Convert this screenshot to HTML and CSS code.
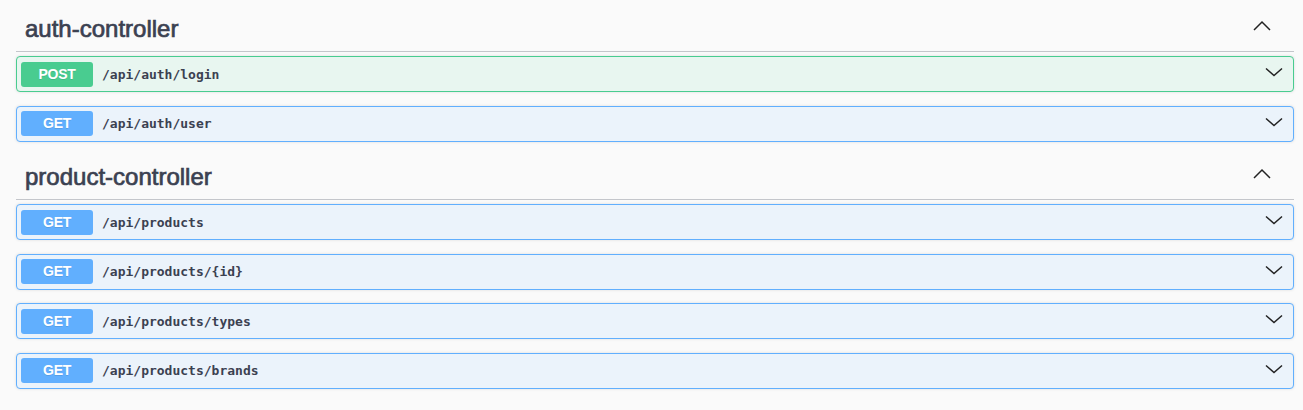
FILE: index.html
```html
<!DOCTYPE html>
<html>
<head>
<meta charset="utf-8">
<link rel="stylesheet" href="styles.css">
</head>
<body>
<div class="wrapper">
  <section class="tag-section">
    <h3 class="tag-head">
      <span class="tag-name">auth-controller</span>
      <svg class="arrow-up" width="20" height="20" viewBox="0 0 20 20"><polyline points="2,14 10,6 18,14"/></svg>
    </h3>
    <div class="opblock post">
      <span class="method">POST</span>
      <span class="path">/api/auth/login</span>
      <svg class="arrow" width="20" height="20" viewBox="0 0 20 20"><polyline points="2,6.5 10,13.5 18,6.5"/></svg>
    </div>
    <div class="opblock get">
      <span class="method">GET</span>
      <span class="path">/api/auth/user</span>
      <svg class="arrow" width="20" height="20" viewBox="0 0 20 20"><polyline points="2,6.5 10,13.5 18,6.5"/></svg>
    </div>
  </section>
  <section class="tag-section">
    <h3 class="tag-head">
      <span class="tag-name">product-controller</span>
      <svg class="arrow-up" width="20" height="20" viewBox="0 0 20 20"><polyline points="2,14 10,6 18,14"/></svg>
    </h3>
    <div class="opblock get">
      <span class="method">GET</span>
      <span class="path">/api/products</span>
      <svg class="arrow" width="20" height="20" viewBox="0 0 20 20"><polyline points="2,6.5 10,13.5 18,6.5"/></svg>
    </div>
    <div class="opblock get">
      <span class="method">GET</span>
      <span class="path">/api/products/{id}</span>
      <svg class="arrow" width="20" height="20" viewBox="0 0 20 20"><polyline points="2,6.5 10,13.5 18,6.5"/></svg>
    </div>
    <div class="opblock get">
      <span class="method">GET</span>
      <span class="path">/api/products/types</span>
      <svg class="arrow" width="20" height="20" viewBox="0 0 20 20"><polyline points="2,6.5 10,13.5 18,6.5"/></svg>
    </div>
    <div class="opblock get">
      <span class="method">GET</span>
      <span class="path">/api/products/brands</span>
      <svg class="arrow" width="20" height="20" viewBox="0 0 20 20"><polyline points="2,6.5 10,13.5 18,6.5"/></svg>
    </div>
  </section>
</div>
</body>
</html>
```
FILE: styles.css
```css
html, body {
  margin: 0;
  padding: 0;
  background: #fafafa;
}
body {
  font-family: "Liberation Sans", Arial, sans-serif;
  color: #3b4151;
}
.wrapper {
  padding: 7px 9px 0 16px;
}
.tag-head {
  margin: 0 0 4px 0;
  display: flex;
  align-items: center;
  justify-content: space-between;
  padding: 10px 22px 10px 9px;
  height: 24px;
  border-bottom: 1px solid #c4c6cb;
  font-size: 24px;
  font-weight: normal;
  line-height: 24px;
}
.tag-name {
  color: #3b4151;
  -webkit-text-stroke: 0.7px #3b4151;
}
.arrow-up {
  margin-bottom: 6px;
  fill: none;
  stroke: #222;
  stroke-width: 1.5;
}
.opblock {
  display: flex;
  align-items: center;
  height: 24px;
  padding: 5px 9px 5px 4px;
  margin-bottom: 13.5px;
  border: 1px solid;
  border-radius: 4px;
  box-shadow: 0 0 3px rgba(0, 0, 0, 0.12);
}
.opblock.post {
  border-color: #49cc90;
  background: #e8f6f0;
}
.opblock.get {
  border-color: #61affe;
  background: #ebf3fb;
}
.method {
  width: 72px;
  height: 25px;
  line-height: 25px;
  border-radius: 3px;
  text-align: center;
  color: #fff;
  font-weight: bold;
  font-size: 14px;
  letter-spacing: -0.3px;
  text-shadow: 0 1px 0 rgba(0, 0, 0, 0.1);
}
.post .method { background: #49cc90; }
.get .method { background: #61affe; }
.path {
  flex: 1;
  padding-left: 9px;
  font-family: "DejaVu Sans Mono", "Liberation Mono", monospace;
  font-size: 13px;
  font-weight: bold;
  color: #3b4151;
}
.arrow {
  fill: none;
  stroke: #222;
  stroke-width: 1.5;
  margin-top: -4px;
}
```
